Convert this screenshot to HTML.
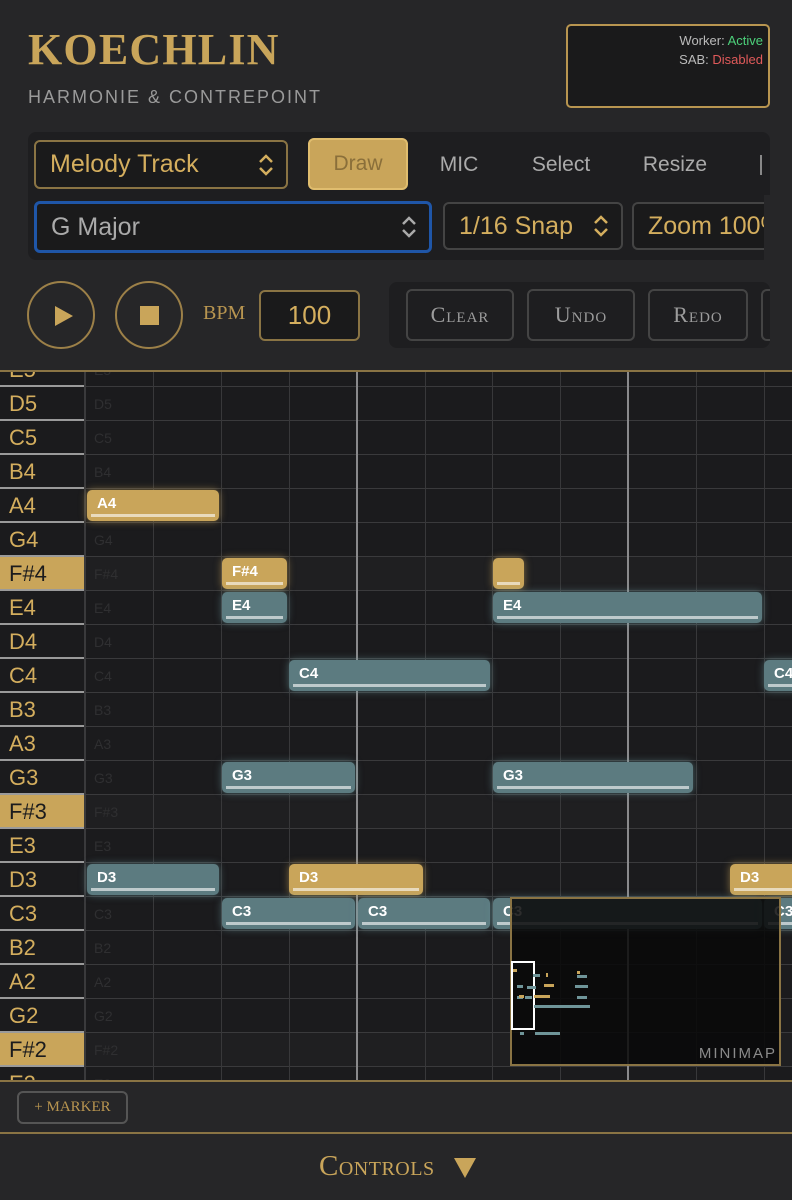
<!DOCTYPE html>
<html><head><meta charset="utf-8"><style>
*{box-sizing:border-box;margin:0;padding:0}
body{width:792px;height:1200px;background:#262628;font-family:"Liberation Sans",sans-serif;position:relative;overflow:hidden;color:#c9a55a}
.abs{position:absolute}
.title{left:28px;top:24px;font-family:"Liberation Serif",serif;font-size:44px;font-weight:bold;letter-spacing:1.2px;color:#c9a55a}
.sub{left:28px;top:87px;font-size:18px;letter-spacing:2px;color:#9a9a9a}
.status{left:566px;top:24px;width:204px;height:84px;border:2px solid #b89550;border-radius:5px;background:#1a1a1b;font-size:13px;text-align:right;padding:5px 5px;line-height:19px;color:#bbb}
.panel{left:28px;top:132px;width:742px;height:128px;background:#1e1e20;border-radius:8px}
.sel{border:2px solid #8a7444;border-radius:6px;background:#1a1a1b;color:#d4ae5e;font-size:25px;padding-left:14px;display:flex;align-items:center}
.chev{position:absolute;right:12px;top:50%;transform:translateY(-50%)}
.btn{font-size:21px;color:#aaa;display:flex;align-items:center;justify-content:center}
.circ{width:68px;height:68px;border:2px solid #9c8048;border-radius:50%}
.sm{font-family:"Liberation Serif",serif;font-variant:small-caps;font-size:22px;color:#9c9c9c;border:2px solid #444;border-radius:6px;display:flex;align-items:center;justify-content:center;height:52px;top:289px;letter-spacing:1px}
#grid{left:0;top:370px;width:792px;height:710px;overflow:hidden;background:#1b1b1d;border-top:2px solid #8a7444}
.key{position:absolute;left:0;width:84px;height:34px;background:#1b1b1d;border-bottom:2px solid #9a9a9a;font-size:22px;color:#d4ae5e;padding-left:9px;line-height:34px}
.key.s{background:#c9a55a;color:#1b1b1d}
.rl{position:absolute;left:86px;width:706px;height:34px;border-bottom:1px solid #3a3a3c;font-size:14px;color:#2f2f31;padding-left:8px;line-height:34px}
.rl.s{background:#1f1f21}
.vl{position:absolute;top:0;width:1px;height:710px;background:#38383a}
.note{position:absolute;height:31px;border-radius:5px;font-size:15px;font-weight:bold;color:#fff;padding-left:10px;line-height:27px}
.note:after{content:"";position:absolute;left:4px;right:4px;bottom:4px;height:3px;background:rgba(255,255,255,.6)}
.g{background:#c9a55a;box-shadow:0 0 8px rgba(201,165,90,.6)}
.t{background:#5c7b80;box-shadow:0 0 8px rgba(120,170,175,.5)}
</style></head><body>
<div class="abs title">KOECHLIN</div>
<div class="abs sub">HARMONIE &amp; CONTREPOINT</div>
<div class="abs status">Worker: <span style="color:#4cd07a">Active</span><br>SAB: <span style="color:#e05a5a">Disabled</span></div>
<div class="abs panel"></div>
<div class="abs sel" style="left:34px;top:140px;width:254px;height:49px">Melody Track<svg class="chev" width="16" height="24" viewBox="0 0 16 24"><path d="M2 9l6-6 6 6M2 15l6 6 6-6" fill="none" stroke="#d4ae5e" stroke-width="2.5"/></svg></div>
<div class="abs btn" style="left:308px;top:138px;width:100px;height:52px;background:#c9a55a;border:2px solid #e0bd6e;border-radius:6px;color:#8a6f3a">Draw</div>
<div class="abs btn" style="left:420px;top:140px;width:78px;height:50px">MIC</div>
<div class="abs btn" style="left:520px;top:140px;width:82px;height:50px">Select</div>
<div class="abs btn" style="left:635px;top:140px;width:80px;height:50px">Resize</div>
<div class="abs" style="left:760px;top:155px;width:2px;height:20px;background:#888"></div>
<div class="abs sel" style="left:34px;top:201px;width:398px;height:52px;border-color:#1f56a8;border-width:3px;color:#aaa">G Major<svg class="chev" width="16" height="24" viewBox="0 0 16 24"><path d="M2 9l6-6 6 6M2 15l6 6 6-6" fill="none" stroke="#aaa" stroke-width="2.5"/></svg></div>
<div class="abs sel" style="left:443px;top:202px;width:180px;height:48px;border-color:#444">1/16 Snap<svg class="chev" width="16" height="24" viewBox="0 0 16 24"><path d="M2 9l6-6 6 6M2 15l6 6 6-6" fill="none" stroke="#d4ae5e" stroke-width="2.5"/></svg></div>
<div class="abs sel" style="left:632px;top:202px;width:140px;height:48px;border-color:#444;overflow:hidden;white-space:nowrap;border-right:none;border-radius:6px 0 0 6px">Zoom 100%</div>
<div class="abs" style="left:764px;top:195px;width:28px;height:66px;background:#262628"></div>
<div class="abs circ" style="left:27px;top:281px"><svg class="abs" style="left:24px;top:21px" width="22" height="24"><path d="M2 2L20 12L2 22Z" fill="#c9a55a"/></svg></div>
<div class="abs circ" style="left:115px;top:281px"><div class="abs" style="left:23px;top:23px;width:19px;height:19px;background:#c9a55a"></div></div>
<div class="abs" style="left:203px;top:302px;font-family:'Liberation Serif',serif;font-size:20px;color:#b89550">BPM</div>
<div class="abs sel" style="left:259px;top:290px;width:101px;height:51px;font-size:26px;justify-content:center;padding:0">100</div>
<div class="abs" style="left:389px;top:282px;width:381px;height:66px;background:#1e1e20;border-radius:8px"></div>
<div class="abs sm" style="left:406px;width:108px">Clear</div>
<div class="abs sm" style="left:527px;width:108px">Undo</div>
<div class="abs sm" style="left:648px;width:100px">Redo</div>
<div class="abs sm" style="left:761px;width:20px;border-right:none;border-radius:6px 0 0 6px"></div>
<div class="abs" style="left:770px;top:282px;width:22px;height:68px;background:#262628"></div>

<div id="grid" class="abs">
<div style="position:absolute;left:84px;top:0;width:2px;height:710px;background:#3a3a3c"></div>
<div class="key" style="top:-19px">E5</div><div class="rl" style="top:-19px">E5</div>
<div class="key" style="top:15px">D5</div><div class="rl" style="top:15px">D5</div>
<div class="key" style="top:49px">C5</div><div class="rl" style="top:49px">C5</div>
<div class="key" style="top:83px">B4</div><div class="rl" style="top:83px">B4</div>
<div class="key" style="top:117px">A4</div><div class="rl" style="top:117px">A4</div>
<div class="key" style="top:151px">G4</div><div class="rl" style="top:151px">G4</div>
<div class="key s" style="top:185px">F#4</div><div class="rl s" style="top:185px">F#4</div>
<div class="key" style="top:219px">E4</div><div class="rl" style="top:219px">E4</div>
<div class="key" style="top:253px">D4</div><div class="rl" style="top:253px">D4</div>
<div class="key" style="top:287px">C4</div><div class="rl" style="top:287px">C4</div>
<div class="key" style="top:321px">B3</div><div class="rl" style="top:321px">B3</div>
<div class="key" style="top:355px">A3</div><div class="rl" style="top:355px">A3</div>
<div class="key" style="top:389px">G3</div><div class="rl" style="top:389px">G3</div>
<div class="key s" style="top:423px">F#3</div><div class="rl s" style="top:423px">F#3</div>
<div class="key" style="top:457px">E3</div><div class="rl" style="top:457px">E3</div>
<div class="key" style="top:491px">D3</div><div class="rl" style="top:491px">D3</div>
<div class="key" style="top:525px">C3</div><div class="rl" style="top:525px">C3</div>
<div class="key" style="top:559px">B2</div><div class="rl" style="top:559px">B2</div>
<div class="key" style="top:593px">A2</div><div class="rl" style="top:593px">A2</div>
<div class="key" style="top:627px">G2</div><div class="rl" style="top:627px">G2</div>
<div class="key s" style="top:661px">F#2</div><div class="rl s" style="top:661px">F#2</div>
<div class="key" style="top:695px">E2</div><div class="rl" style="top:695px">E2</div>
<div class="vl" style="left:153px"></div><div class="vl" style="left:221px"></div><div class="vl" style="left:289px"></div>
<div class="vl" style="left:356px;width:2px;background:#8a8a8c"></div>
<div class="vl" style="left:425px"></div><div class="vl" style="left:492px"></div><div class="vl" style="left:560px"></div>
<div class="vl" style="left:627px;width:2px;background:#8a8a8c"></div>
<div class="vl" style="left:696px"></div><div class="vl" style="left:764px"></div>

<div class="note g" style="left:87px;top:118px;width:132px">A4</div>
<div class="note g" style="left:222px;top:186px;width:65px">F#4</div>
<div class="note g" style="left:493px;top:186px;width:31px"></div>
<div class="note t" style="left:222px;top:220px;width:65px">E4</div>
<div class="note t" style="left:493px;top:220px;width:269px">E4</div>
<div class="note t" style="left:289px;top:288px;width:201px">C4</div>
<div class="note t" style="left:764px;top:288px;width:60px">C4</div>
<div class="note t" style="left:222px;top:390px;width:133px">G3</div>
<div class="note t" style="left:493px;top:390px;width:200px">G3</div>
<div class="note t" style="left:87px;top:492px;width:132px">D3</div>
<div class="note g" style="left:289px;top:492px;width:134px">D3</div>
<div class="note g" style="left:730px;top:492px;width:80px">D3</div>
<div class="note t" style="left:222px;top:526px;width:133px">C3</div>
<div class="note t" style="left:358px;top:526px;width:132px">C3</div>
<div class="note t" style="left:493px;top:526px;width:269px">C3</div>
<div class="note t" style="left:764px;top:526px;width:60px">C3</div>

<div style="position:absolute;left:510px;top:525px;width:271px;height:169px;border:2px solid #8a7444;background:rgba(8,8,8,.85)">
<div style="position:absolute;left:-1px;top:62px;width:24px;height:69px;border:2px solid #fff"></div>
<svg style="position:absolute;left:0;top:60px" width="100" height="80">
<g fill="#6f9599"><rect x="15" y="27" width="9" height="3"/><rect x="22" y="46" width="29" height="3"/><rect x="5" y="37" width="6" height="3"/><rect x="13" y="37" width="7" height="3"/><rect x="21" y="15" width="7" height="3"/><rect x="40" y="46" width="30" height="3"/><rect x="5" y="26" width="6" height="3"/><rect x="65" y="46" width="13" height="3"/><rect x="63" y="26" width="13" height="3"/><rect x="65" y="16" width="10" height="3"/><rect x="65" y="37" width="10" height="3"/><rect x="23" y="73" width="25" height="3"/><rect x="8" y="73" width="4" height="3"/></g>
<g fill="#c9a55a"><rect x="1" y="10" width="4" height="3"/><rect x="22" y="36" width="16" height="3"/><rect x="32" y="25" width="10" height="3"/><rect x="65" y="12" width="3" height="3"/><rect x="34" y="14" width="2" height="4"/><rect x="7" y="36" width="5" height="3"/></g>
</svg>
<div style="position:absolute;right:2px;bottom:2px;font-size:15px;letter-spacing:2px;color:#8a8a8a">MINIMAP</div>
</div>
</div>
<div class="abs" style="left:0;top:1080px;width:792px;height:2px;background:#8a7444"></div>
<div class="abs" style="left:17px;top:1091px;width:111px;height:33px;border:2px solid #555;border-radius:6px;font-family:'Liberation Serif',serif;font-size:15px;color:#b89550;display:flex;align-items:center;justify-content:center">+ MARKER</div>
<div class="abs" style="left:0;top:1132px;width:792px;height:2px;background:#8a7444"></div>
<div class="abs" style="left:319px;top:1150px;font-family:'Liberation Serif',serif;font-variant:small-caps;font-size:29px;letter-spacing:0.5px;color:#c9a55a">Controls</div>
<svg class="abs" style="left:454px;top:1158px" width="22" height="20"><path d="M0 0H22L11 20Z" fill="#c9a55a"/></svg>
</body></html>
